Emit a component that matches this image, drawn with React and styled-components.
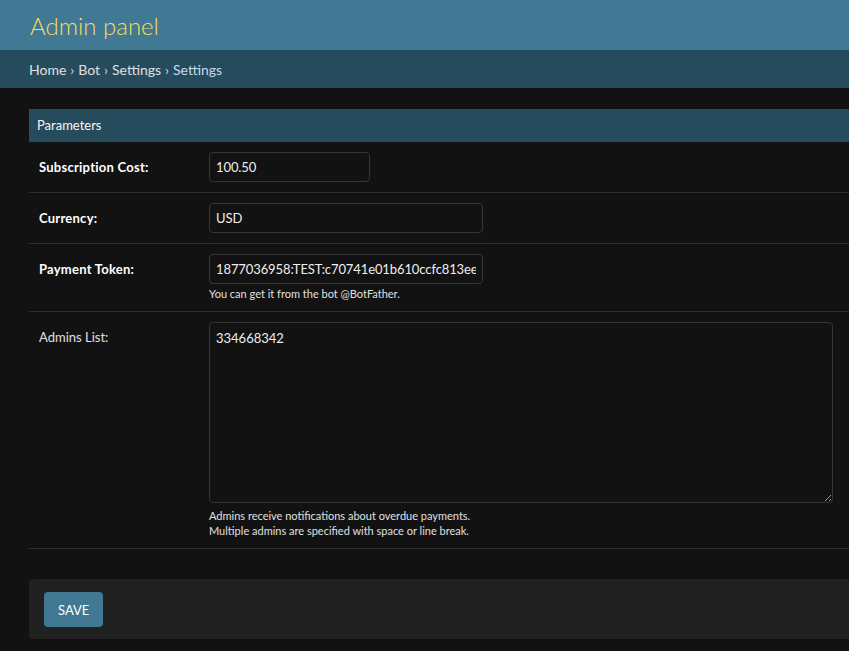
import React from 'react';
import styled, { createGlobalStyle } from 'styled-components';

const Global = createGlobalStyle`
  html, body { margin: 0; padding: 0; background: #121212; overflow: hidden; }
  body { font-family: Lato, "Open Sans", sans-serif; color: #eeeeee; font-size: 14px; }
  * { box-sizing: border-box; }
`;

const Header = styled.header`
  height: 50px;
  background: #417893;
  display: flex;
  align-items: center;
  padding: 0 30px;
`;

const Brand = styled.h1`
  margin: 0;
  font-size: 24px;
  font-weight: 300;
  color: #f5dd5d;
`;

const Crumbs = styled.nav`
  height: 38px;
  background: #264b5d;
  display: flex;
  align-items: center;
  padding: 0 29px;
  font-size: 14px;
  color: #c4dce8;
`;

const Crumb = styled.a`
  color: #e0e0e0;
  text-decoration: none;
`;

const Sep = styled.span`
  margin: 0 4px;
`;

const Main = styled.main`
  padding: 21px 0 0 29px;
`;

const Module = styled.fieldset`
  margin: 0 0 30px;
  padding: 0;
  border: none;
  min-width: 0;
`;

const ModuleTitle = styled.h2`
  margin: 0;
  height: 33px;
  line-height: 33px;
  padding: 0 8px;
  background: #264b5d;
  color: #f7f7f7;
  font-size: 13px;
  font-weight: 400;
`;

const Row = styled.div`
  display: flex;
  padding: 10px;
  border-bottom: 1px solid #2e2e2e;
`;

const Label = styled.label`
  width: 170px;
  flex: none;
  padding-top: 7px;
  font-size: 13px;
  line-height: 16px;
  font-weight: ${p => (p.$required ? 700 : 400)};
  letter-spacing: ${p => (p.$required ? '0.25px' : '0')};
  color: ${p => (p.$required ? '#ffffff' : '#e0e0e0')};
`;

const Field = styled.div`
  display: flex;
  flex-direction: column;
`;

const Input = styled.input`
  width: ${p => p.$w}px;
  height: 30px;
  padding: 5px 6px;
  background: #121212;
  border: 1px solid #353535;
  border-radius: 4px;
  color: #eeeeee;
  font-family: inherit;
  font-size: 13px;
  letter-spacing: -0.1px;
  outline: none;
`;

const TextArea = styled.textarea`
  width: 624px;
  height: 181px;
  padding: 7px 6px;
  background: #121212;
  border: 1px solid #353535;
  border-radius: 4px;
  color: #eeeeee;
  font-family: inherit;
  font-size: 13px;
  outline: none;
  resize: both;
  display: block;
`;

const Help = styled.div`
  margin-top: ${p => (p.$multi ? 5 : 3)}px;
  font-size: 11px;
  line-height: ${p => (p.$multi ? 15 : 14)}px;
  color: #e0e0e0;
`;

const SubmitRow = styled.div`
  height: 60px;
  padding: 13px 15px;
  background: #212121;
  border-radius: 4px 0 0 4px;
  display: flex;
  align-items: flex-start;
`;

const Button = styled.button`
  height: 35px;
  padding: 0 14px;
  background: #417893;
  border: none;
  border-radius: 4px;
  color: #ffffff;
  font-family: inherit;
  font-size: 13px;
  cursor: pointer;
`;

export default function App() {
  return (
    <>
      <Global />
      <Header>
        <Brand>Admin panel</Brand>
      </Header>
      <Crumbs>
        <Crumb href="#">Home</Crumb>
        <Sep>›</Sep>
        <Crumb href="#">Bot</Crumb>
        <Sep>›</Sep>
        <Crumb href="#">Settings</Crumb>
        <Sep>›</Sep>
        <span>Settings</span>
      </Crumbs>
      <Main>
        <Module>
          <ModuleTitle>Parameters</ModuleTitle>
          <Row>
            <Label $required>Subscription Cost:</Label>
            <Field>
              <Input $w={161} defaultValue="100.50" />
            </Field>
          </Row>
          <Row>
            <Label $required>Currency:</Label>
            <Field>
              <Input $w={274} defaultValue="USD" />
            </Field>
          </Row>
          <Row>
            <Label $required>Payment Token:</Label>
            <Field>
              <Input $w={274} defaultValue="1877036958:TEST:c70741e01b610ccfc813ee08a1" />
              <Help>You can get it from the bot @BotFather.</Help>
            </Field>
          </Row>
          <Row>
            <Label>Admins List:</Label>
            <Field>
              <TextArea defaultValue="334668342" />
              <Help $multi>
                Admins receive notifications about overdue payments.
                <br />
                Multiple admins are specified with space or line break.
              </Help>
            </Field>
          </Row>
        </Module>
        <SubmitRow>
          <Button>SAVE</Button>
        </SubmitRow>
      </Main>
    </>
  );
}
